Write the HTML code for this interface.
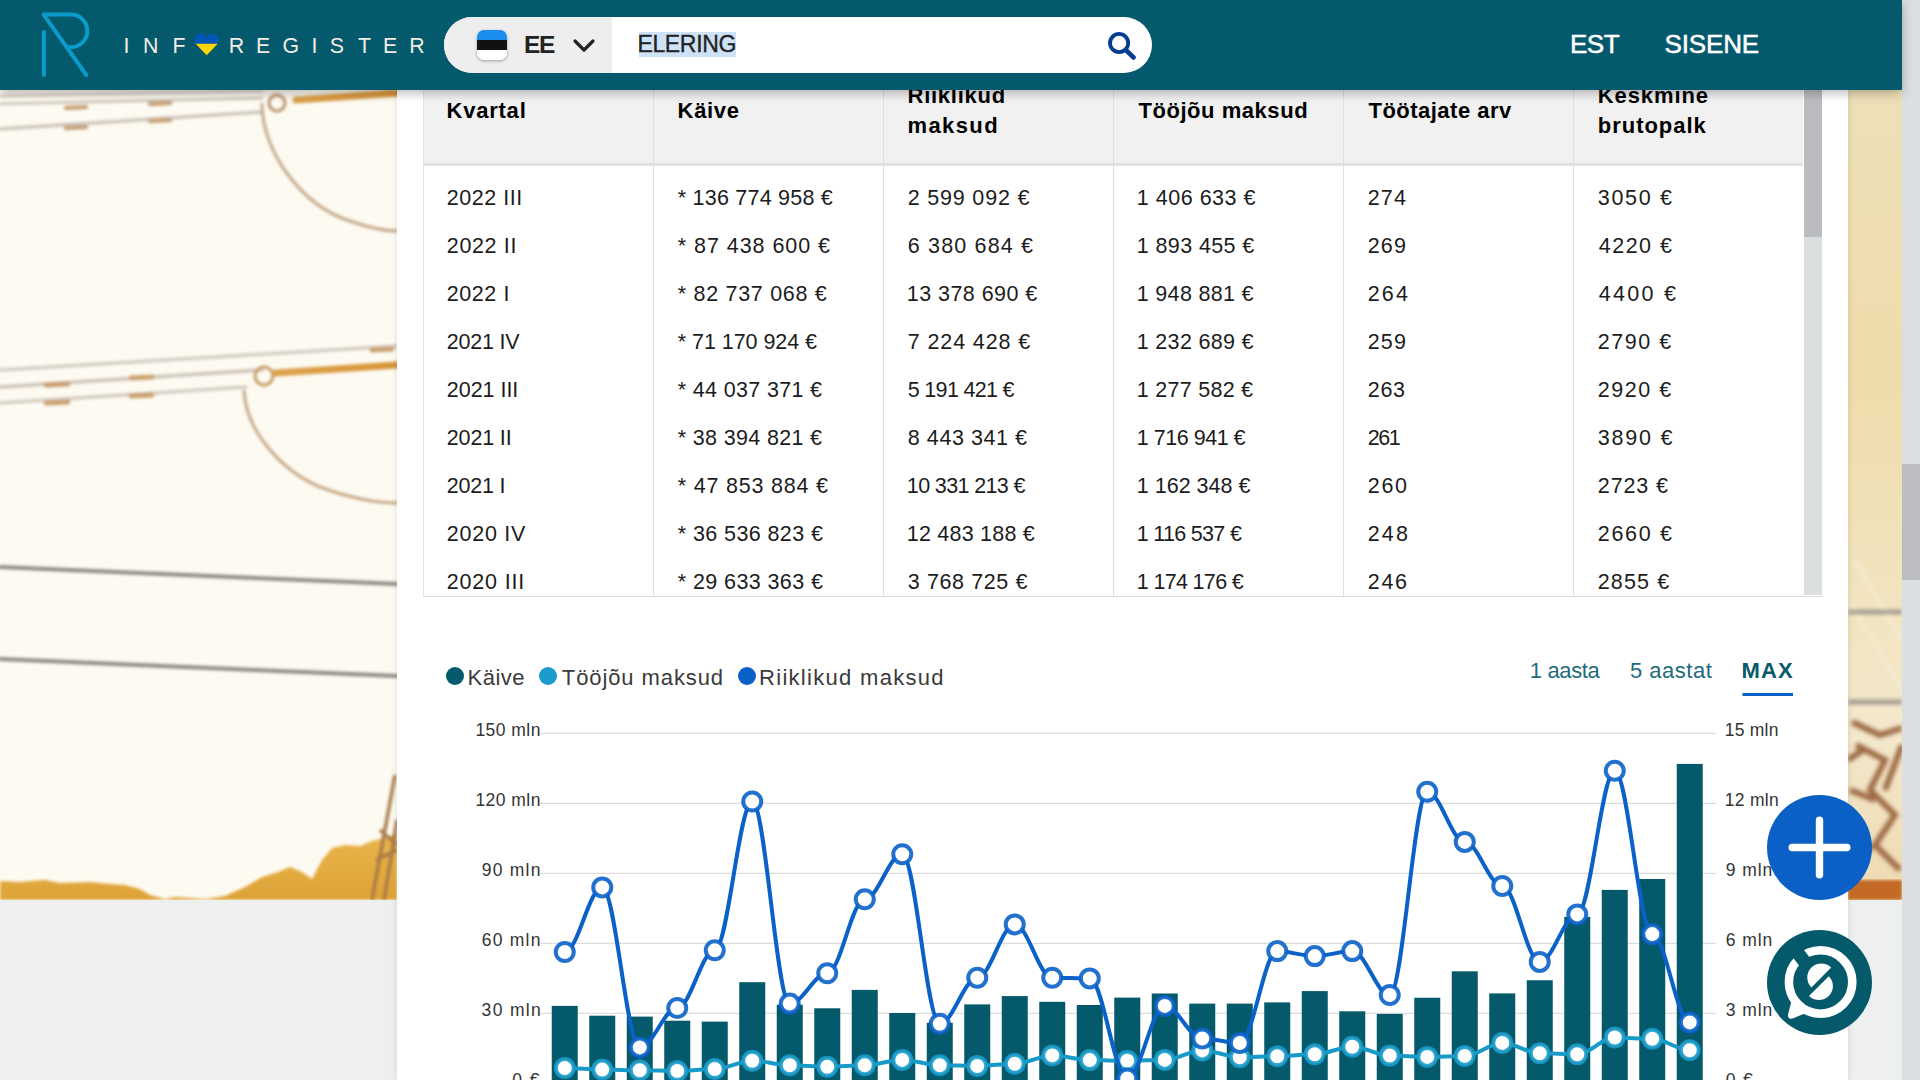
<!DOCTYPE html>
<html><head><meta charset="utf-8">
<style>
html,body{margin:0;padding:0;width:1920px;height:1080px;overflow:hidden;background:#eef0f0;font-family:"Liberation Sans",sans-serif;}
#bg{position:absolute;left:0;top:0;width:1902px;height:900px;background:#fcf9ef;overflow:hidden}
#panel{position:absolute;left:397px;top:0;width:1451px;height:1080px;background:#fff;box-shadow:0 0 6px rgba(0,0,0,.12)}
#thead{position:absolute;left:423px;top:70px;width:1380px;height:93px;background:#f1f1f1}
#theadb{position:absolute;left:423px;top:163px;width:1380px;height:3px;background:#dee2e3}
.vl{position:absolute;width:1px;background:#dcdfe0}
#tb{position:absolute;left:423px;top:595.5px;width:1400px;height:1px;background:#dadddf}
#tl{position:absolute;left:423px;top:90px;width:1px;height:506px;background:#e2e4e5}
#strack{position:absolute;left:1804px;top:90px;width:18px;height:505px;background:#dcdfe0}
#sthumb{position:absolute;left:1804px;top:90px;width:18px;height:147px;background:#bbbcc0}
#pstrack{position:absolute;left:1902px;top:0;width:18px;height:1080px;background:#dcdfe1}
#psthumb{position:absolute;left:1902px;top:464px;width:18px;height:116px;background:#bcbdc1}
#hdr{position:absolute;left:0;top:0;width:1902px;height:90px;background:#045a6c;box-shadow:0 3px 10px rgba(0,0,0,.28)}
#search{position:absolute;left:444px;top:17px;width:708px;height:56px;border-radius:28px;background:#fff;overflow:hidden}
#sleft{position:absolute;left:0;top:0;width:168px;height:56px;background:#eeeeee}
#flag{position:absolute;left:33px;top:13px;width:30px;height:30px;border-radius:7px;overflow:hidden;box-shadow:0 1px 3px rgba(0,0,0,.35);background:linear-gradient(#1b8ff0 0 33%,#111 33% 66%,#fff 66%)}
#hl{position:absolute;left:639px;top:32px;width:97px;height:25px;background:#cde1f7}
#svg{position:absolute;left:0;top:0}
.btn{position:absolute;width:105px;height:105px;border-radius:50%}
.ax{font-size:17.5px;fill:#333;letter-spacing:0.3px}
.th{font-size:22px;font-weight:bold;fill:#000;letter-spacing:0.3px}
.td{font-size:21.5px;fill:#1c1c1c;letter-spacing:0.6px}
.lgd{font-size:22px;fill:#3c3c3c;letter-spacing:0.5px}
.lg{font-size:23px;fill:#f4ece4}
</style></head><body>
<div id="bg">
<svg width="1902" height="900" style="position:absolute;left:0;top:0">
<defs>
<filter id="bl" x="-5%" y="-5%" width="110%" height="110%"><feGaussianBlur stdDeviation="1.4"/></filter>
<filter id="bl2" x="-20%" y="-5%" width="140%" height="110%"><feGaussianBlur stdDeviation="2.2"/></filter>
<linearGradient id="gold" x1="0" y1="0" x2="0" y2="1"><stop offset="0" stop-color="#e9b54c"/><stop offset="1" stop-color="#dea235"/></linearGradient>
<linearGradient id="rod" x1="0" y1="0" x2="1" y2="0"><stop offset="0" stop-color="#dca24a"/><stop offset="1" stop-color="#d89438"/></linearGradient>
<linearGradient id="strip" x1="0" y1="0" x2="0" y2="1"><stop offset="0" stop-color="#ede0b8"/><stop offset="0.35" stop-color="#efdcab"/><stop offset="0.6" stop-color="#f1e3bd"/><stop offset="0.8" stop-color="#f3e8cc"/><stop offset="1" stop-color="#efd9b0"/></linearGradient>
</defs>
<rect width="1902" height="900" fill="#fdfaf1"/>
<g filter="url(#bl)" fill="none" stroke-linecap="round">
<path d="M0 96 L262 91" stroke="#d3ccc2" stroke-width="2.5"/>
<path d="M0 104 L262 98" stroke="#c9c0b5" stroke-width="2.5"/>
<path d="M0 129 L262 112" stroke="#cdc4ba" stroke-width="3.5"/>
<path d="M66 108 L86 107 M66 128 L86 127 M150 104 L170 103 M150 121 L170 120" stroke="#c8a47c" stroke-width="4.5"/>
<circle cx="277" cy="103" r="8" stroke="#b99570" stroke-width="3"/>
<path d="M296 100 L397 93" stroke="url(#rod)" stroke-width="7"/>
<path d="M262 104 C 262 150 300 205 350 221 C 370 228 385 231 397 231" stroke="#c4a888" stroke-width="3"/>
<path d="M0 370 L397 346" stroke="#d3ccc3" stroke-width="3.5"/>
<path d="M0 387 L262 370" stroke="#cbc2b8" stroke-width="3.5"/>
<path d="M0 403 L246 387" stroke="#d3ccc3" stroke-width="3.5"/>
<path d="M46 385 L68 384 M46 403 L68 402 M131 378 L152 377 M131 396 L152 395 M372 350 L392 349" stroke="#cba070" stroke-width="5"/>
<circle cx="264" cy="376" r="9" stroke="#c49a62" stroke-width="3"/>
<path d="M276 373 L397 365" stroke="url(#rod)" stroke-width="7"/>
<path d="M244 391 C 246 430 280 470 320 487 C 350 498 375 503 397 503" stroke="#c6a785" stroke-width="3"/>
<path d="M0 567 L397 584" stroke="#908a86" stroke-width="4"/>
<path d="M0 659 L397 676" stroke="#908a86" stroke-width="4"/>
</g>
<path d="M0 881 L20 882 L45 880 L60 883 L90 882 L110 884 L125 885 L140 889 L150 895 L165 899 L175 897 L205 899 L225 896 L245 887 L262 877 L275 873 L290 867 L302 872 L312 879 L322 860 L332 848 L345 845 L360 846 L372 841 L385 838 L397 834 L397 900 L0 900 Z" fill="url(#gold)" filter="url(#bl)"/>
<path d="M395 775 L372 900 M397 820 L384 900 M376 860 L397 850 M380 830 L397 845" stroke="#a87a48" stroke-width="3.5" fill="none" filter="url(#bl)"/>
<rect x="1848" y="90" width="54" height="810" fill="url(#strip)"/>
<g filter="url(#bl2)" fill="none">
<path d="M1848 598 L1902 690 M1855 560 L1902 640" stroke="#f6ecd4" stroke-width="3"/>
<path d="M1848 612 L1902 612" stroke="#8f8882" stroke-width="4"/>
<path d="M1848 702 L1902 702" stroke="#8f8882" stroke-width="4"/>
<path d="M1852 722 L1880 735 L1902 728 M1856 745 L1885 760 L1870 790 L1895 815 L1875 845 L1900 870 M1902 745 L1885 790 M1850 790 L1875 800 M1848 835 L1872 850 M1848 760 L1866 748" stroke="#9c6842" stroke-width="6"/>
</g>
<rect x="1848" y="880" width="54" height="20" fill="#c46a26" filter="url(#bl)"/>
</svg>
</div>
<div id="panel"></div>
<div id="thead"></div>
<div id="theadb"></div>
<div class="vl" style="left:653px;top:70px;height:526px"></div>
<div class="vl" style="left:883px;top:70px;height:526px"></div>
<div class="vl" style="left:1113px;top:70px;height:526px"></div>
<div class="vl" style="left:1343px;top:70px;height:526px"></div>
<div class="vl" style="left:1573px;top:70px;height:526px"></div>
<div id="tl"></div>
<div id="tb"></div>
<div id="strack"></div>
<div id="sthumb"></div>
<div id="pstrack"></div>
<div id="psthumb"></div>
<svg id="svg" width="1920" height="1080">
<text x="446.80" y="205.20" style="font-size:21.5px;fill:#1c1c1c;letter-spacing:0.543px;">2022 III</text>
<text x="677.80" y="205.20" style="font-size:21.5px;fill:#1c1c1c;letter-spacing:0.221px;">* 136 774 958 €</text>
<text x="907.80" y="205.20" style="font-size:21.5px;fill:#1c1c1c;letter-spacing:0.800px;">2 599 092 €</text>
<text x="1136.80" y="205.20" style="font-size:21.5px;fill:#1c1c1c;letter-spacing:0.510px;">1 406 633 €</text>
<text x="1367.80" y="205.20" style="font-size:21.5px;fill:#1c1c1c;letter-spacing:1.100px;">274</text>
<text x="1597.80" y="205.20" style="font-size:21.5px;fill:#1c1c1c;letter-spacing:1.680px;">3050 €</text>
<text x="446.80" y="253.20" style="font-size:21.5px;fill:#1c1c1c;letter-spacing:0.650px;">2022 II</text>
<text x="677.80" y="253.20" style="font-size:21.5px;fill:#1c1c1c;letter-spacing:0.946px;">* 87 438 600 €</text>
<text x="907.80" y="253.20" style="font-size:21.5px;fill:#1c1c1c;letter-spacing:1.160px;">6 380 684 €</text>
<text x="1136.80" y="253.20" style="font-size:21.5px;fill:#1c1c1c;letter-spacing:0.390px;">1 893 455 €</text>
<text x="1367.80" y="253.20" style="font-size:21.5px;fill:#1c1c1c;letter-spacing:1.100px;">269</text>
<text x="1598.80" y="253.20" style="font-size:21.5px;fill:#1c1c1c;letter-spacing:1.480px;">4220 €</text>
<text x="446.80" y="301.20" style="font-size:21.5px;fill:#1c1c1c;letter-spacing:0.560px;">2022 I</text>
<text x="677.80" y="301.20" style="font-size:21.5px;fill:#1c1c1c;letter-spacing:0.700px;">* 82 737 068 €</text>
<text x="906.80" y="301.20" style="font-size:21.5px;fill:#1c1c1c;letter-spacing:0.445px;">13 378 690 €</text>
<text x="1136.80" y="301.20" style="font-size:21.5px;fill:#1c1c1c;letter-spacing:0.310px;">1 948 881 €</text>
<text x="1367.80" y="301.20" style="font-size:21.5px;fill:#1c1c1c;letter-spacing:2.100px;">264</text>
<text x="1598.80" y="301.20" style="font-size:21.5px;fill:#1c1c1c;letter-spacing:2.260px;">4400 €</text>
<text x="446.80" y="349.20" style="font-size:21.5px;fill:#1c1c1c;letter-spacing:-0.233px;">2021 IV</text>
<text x="677.80" y="349.20" style="font-size:21.5px;fill:#1c1c1c;letter-spacing:-0.054px;">* 71 170 924 €</text>
<text x="907.80" y="349.20" style="font-size:21.5px;fill:#1c1c1c;letter-spacing:0.880px;">7 224 428 €</text>
<text x="1136.80" y="349.20" style="font-size:21.5px;fill:#1c1c1c;letter-spacing:0.310px;">1 232 689 €</text>
<text x="1367.80" y="349.20" style="font-size:21.5px;fill:#1c1c1c;letter-spacing:1.100px;">259</text>
<text x="1597.80" y="349.20" style="font-size:21.5px;fill:#1c1c1c;letter-spacing:1.520px;">2790 €</text>
<text x="446.80" y="397.20" style="font-size:21.5px;fill:#1c1c1c;letter-spacing:-0.029px;">2021 III</text>
<text x="677.80" y="397.20" style="font-size:21.5px;fill:#1c1c1c;letter-spacing:0.338px;">* 44 037 371 €</text>
<text x="907.80" y="397.20" style="font-size:21.5px;fill:#1c1c1c;letter-spacing:-0.690px;">5 191 421 €</text>
<text x="1136.80" y="397.20" style="font-size:21.5px;fill:#1c1c1c;letter-spacing:0.270px;">1 277 582 €</text>
<text x="1367.80" y="397.20" style="font-size:21.5px;fill:#1c1c1c;letter-spacing:0.700px;">263</text>
<text x="1597.80" y="397.20" style="font-size:21.5px;fill:#1c1c1c;letter-spacing:1.520px;">2920 €</text>
<text x="446.80" y="445.20" style="font-size:21.5px;fill:#1c1c1c;letter-spacing:-0.150px;">2021 II</text>
<text x="677.80" y="445.20" style="font-size:21.5px;fill:#1c1c1c;letter-spacing:0.338px;">* 38 394 821 €</text>
<text x="907.80" y="445.20" style="font-size:21.5px;fill:#1c1c1c;letter-spacing:0.570px;">8 443 341 €</text>
<text x="1136.80" y="445.20" style="font-size:21.5px;fill:#1c1c1c;letter-spacing:-0.480px;">1 716 941 €</text>
<text x="1367.80" y="445.20" style="font-size:21.5px;fill:#1c1c1c;letter-spacing:-1.450px;">261</text>
<text x="1597.80" y="445.20" style="font-size:21.5px;fill:#1c1c1c;letter-spacing:1.760px;">3890 €</text>
<text x="446.80" y="493.20" style="font-size:21.5px;fill:#1c1c1c;letter-spacing:-0.240px;">2021 I</text>
<text x="677.80" y="493.20" style="font-size:21.5px;fill:#1c1c1c;letter-spacing:0.792px;">* 47 853 884 €</text>
<text x="906.80" y="493.20" style="font-size:21.5px;fill:#1c1c1c;letter-spacing:-0.627px;">10 331 213 €</text>
<text x="1136.80" y="493.20" style="font-size:21.5px;fill:#1c1c1c;letter-spacing:0.000px;">1 162 348 €</text>
<text x="1367.80" y="493.20" style="font-size:21.5px;fill:#1c1c1c;letter-spacing:1.700px;">260</text>
<text x="1597.80" y="493.20" style="font-size:21.5px;fill:#1c1c1c;letter-spacing:0.900px;">2723 €</text>
<text x="446.80" y="541.20" style="font-size:21.5px;fill:#1c1c1c;letter-spacing:0.750px;">2020 IV</text>
<text x="677.80" y="541.20" style="font-size:21.5px;fill:#1c1c1c;letter-spacing:0.400px;">* 36 536 823 €</text>
<text x="906.80" y="541.20" style="font-size:21.5px;fill:#1c1c1c;letter-spacing:0.227px;">12 483 188 €</text>
<text x="1136.80" y="541.20" style="font-size:21.5px;fill:#1c1c1c;letter-spacing:-0.690px;">1 116 537 €</text>
<text x="1367.80" y="541.20" style="font-size:21.5px;fill:#1c1c1c;letter-spacing:2.100px;">248</text>
<text x="1597.80" y="541.20" style="font-size:21.5px;fill:#1c1c1c;letter-spacing:1.680px;">2660 €</text>
<text x="446.80" y="589.20" style="font-size:21.5px;fill:#1c1c1c;letter-spacing:0.814px;">2020 III</text>
<text x="677.80" y="589.20" style="font-size:21.5px;fill:#1c1c1c;letter-spacing:0.400px;">* 29 633 363 €</text>
<text x="907.80" y="589.20" style="font-size:21.5px;fill:#1c1c1c;letter-spacing:0.610px;">3 768 725 €</text>
<text x="1136.80" y="589.20" style="font-size:21.5px;fill:#1c1c1c;letter-spacing:-0.670px;">1 174 176 €</text>
<text x="1367.80" y="589.20" style="font-size:21.5px;fill:#1c1c1c;letter-spacing:1.700px;">246</text>
<text x="1597.80" y="589.20" style="font-size:21.5px;fill:#1c1c1c;letter-spacing:1.120px;">2855 €</text>
<text x="446.50" y="118.25" style="font-size:22px;font-weight:bold;fill:#000;letter-spacing:0.775px;">Kvartal</text>
<text x="677.60" y="118.25" style="font-size:22px;font-weight:bold;fill:#000;letter-spacing:0.675px;">Käive</text>
<text x="907.50" y="102.50" style="font-size:22px;font-weight:bold;fill:#000;letter-spacing:0.750px;">Riiklikud</text>
<text x="907.50" y="132.50" style="font-size:22px;font-weight:bold;fill:#000;letter-spacing:1.400px;">maksud</text>
<text x="1138.50" y="118.25" style="font-size:22px;font-weight:bold;fill:#000;letter-spacing:0.542px;">Tööjõu maksud</text>
<text x="1368.50" y="118.10" style="font-size:22px;font-weight:bold;fill:#000;letter-spacing:0.479px;">Töötajate arv</text>
<text x="1597.80" y="102.50" style="font-size:22px;font-weight:bold;fill:#000;letter-spacing:0.900px;">Keskmine</text>
<text x="1597.80" y="132.50" style="font-size:22px;font-weight:bold;fill:#000;letter-spacing:0.975px;">brutopalk</text>
<text x="467.60" y="685.00" style="font-size:22px;fill:#3a3a3a;letter-spacing:0.475px;">Käive</text>
<text x="561.80" y="685.00" style="font-size:22px;fill:#3a3a3a;letter-spacing:0.908px;">Tööjõu maksud</text>
<text x="759.00" y="685.00" style="font-size:22px;fill:#3a3a3a;letter-spacing:1.300px;">Riiklikud maksud</text>
<text x="1529.80" y="678.30" style="font-size:22px;fill:#1d6b7c;letter-spacing:-0.367px;">1 aasta</text>
<text x="1630.00" y="678.30" style="font-size:22px;fill:#1d6b7c;letter-spacing:0.500px;">5 aastat</text>
<text x="1741.40" y="678.30" style="font-size:22px;font-weight:bold;fill:#055a6b;letter-spacing:1.250px;">MAX</text>
<text x="475.40" y="736.20" style="font-size:17.5px;fill:#333;letter-spacing:0.467px;">150 mln</text>
<text x="475.40" y="806.20" style="font-size:17.5px;fill:#333;letter-spacing:0.467px;">120 mln</text>
<text x="481.70" y="876.20" style="font-size:17.5px;fill:#333;letter-spacing:1.230px;">90 mln</text>
<text x="481.70" y="946.20" style="font-size:17.5px;fill:#333;letter-spacing:1.230px;">60 mln</text>
<text x="481.60" y="1016.20" style="font-size:17.5px;fill:#333;letter-spacing:1.340px;">30 mln</text>
<text x="512.20" y="1086.20" style="font-size:17.5px;fill:#333;letter-spacing:1.450px;">0 €</text>
<text x="1724.80" y="736.20" style="font-size:17.5px;fill:#333;letter-spacing:0.220px;">15 mln</text>
<text x="1724.80" y="806.20" style="font-size:17.5px;fill:#333;letter-spacing:0.280px;">12 mln</text>
<text x="1725.80" y="876.20" style="font-size:17.5px;fill:#333;letter-spacing:0.900px;">9 mln</text>
<text x="1725.80" y="946.20" style="font-size:17.5px;fill:#333;letter-spacing:0.900px;">6 mln</text>
<text x="1725.80" y="1016.20" style="font-size:17.5px;fill:#333;letter-spacing:0.900px;">3 mln</text>
<text x="1725.80" y="1086.20" style="font-size:17.5px;fill:#333;letter-spacing:1.300px;">0 €</text>
<circle cx="455" cy="676" r="9" fill="#045a6a"/>
<circle cx="548" cy="676" r="9" fill="#1b9ccb"/>
<circle cx="747" cy="676" r="9" fill="#0a62c9"/>
<rect x="1742.5" y="693" width="50.5" height="3" fill="#0a62c9"/>
<line x1="540" x2="1715.5" y1="733.3" y2="733.3" stroke="#dcdcdc" stroke-width="1.3"/>
<line x1="540" x2="1715.5" y1="803.3" y2="803.3" stroke="#dcdcdc" stroke-width="1.3"/>
<line x1="540" x2="1715.5" y1="873.3" y2="873.3" stroke="#dcdcdc" stroke-width="1.3"/>
<line x1="540" x2="1715.5" y1="943.3" y2="943.3" stroke="#dcdcdc" stroke-width="1.3"/>
<line x1="540" x2="1715.5" y1="1013.3" y2="1013.3" stroke="#dcdcdc" stroke-width="1.3"/>
<line x1="540" x2="1715.5" y1="1083.3" y2="1083.3" stroke="#dcdcdc" stroke-width="1.3"/>
<rect x="551.75" y="1005.90" width="26" height="87.40" fill="#045a6a"/>
<rect x="589.25" y="1015.70" width="26" height="77.60" fill="#045a6a"/>
<rect x="626.75" y="1016.60" width="26" height="76.70" fill="#045a6a"/>
<rect x="664.25" y="1020.70" width="26" height="72.60" fill="#045a6a"/>
<rect x="701.75" y="1021.60" width="26" height="71.70" fill="#045a6a"/>
<rect x="739.25" y="982.20" width="26" height="111.10" fill="#045a6a"/>
<rect x="776.75" y="1004.70" width="26" height="88.60" fill="#045a6a"/>
<rect x="814.25" y="1008.30" width="26" height="85.00" fill="#045a6a"/>
<rect x="851.75" y="989.90" width="26" height="103.40" fill="#045a6a"/>
<rect x="889.25" y="1013.00" width="26" height="80.30" fill="#045a6a"/>
<rect x="926.75" y="1022.80" width="26" height="70.50" fill="#045a6a"/>
<rect x="964.25" y="1004.40" width="26" height="88.90" fill="#045a6a"/>
<rect x="1001.75" y="996.10" width="26" height="97.20" fill="#045a6a"/>
<rect x="1039.25" y="1001.80" width="26" height="91.50" fill="#045a6a"/>
<rect x="1076.75" y="1005.00" width="26" height="88.30" fill="#045a6a"/>
<rect x="1114.25" y="997.60" width="26" height="95.70" fill="#045a6a"/>
<rect x="1151.75" y="993.50" width="26" height="99.80" fill="#045a6a"/>
<rect x="1189.25" y="1003.60" width="26" height="89.70" fill="#045a6a"/>
<rect x="1226.75" y="1003.60" width="26" height="89.70" fill="#045a6a"/>
<rect x="1264.25" y="1002.40" width="26" height="90.90" fill="#045a6a"/>
<rect x="1301.75" y="991.10" width="26" height="102.20" fill="#045a6a"/>
<rect x="1339.25" y="1011.30" width="26" height="82.00" fill="#045a6a"/>
<rect x="1376.75" y="1013.90" width="26" height="79.40" fill="#045a6a"/>
<rect x="1414.25" y="997.75" width="26" height="95.55" fill="#045a6a"/>
<rect x="1451.75" y="971.30" width="26" height="122.00" fill="#045a6a"/>
<rect x="1489.25" y="993.40" width="26" height="99.90" fill="#045a6a"/>
<rect x="1526.75" y="980.25" width="26" height="113.05" fill="#045a6a"/>
<rect x="1564.25" y="916.90" width="26" height="176.40" fill="#045a6a"/>
<rect x="1601.75" y="889.90" width="26" height="203.40" fill="#045a6a"/>
<rect x="1639.25" y="879.00" width="26" height="214.30" fill="#045a6a"/>
<rect x="1676.75" y="763.90" width="26" height="329.40" fill="#045a6a"/>
<path d="M564.75 1068.00 C577.88 1068.00 589.12 1069.60 602.25 1069.60 C615.38 1069.60 626.62 1070.20 639.75 1070.20 C652.88 1070.20 664.12 1071.00 677.25 1071.00 C690.38 1071.00 701.62 1069.00 714.75 1069.00 C727.88 1069.00 739.12 1060.70 752.25 1060.70 C765.38 1060.70 776.62 1065.20 789.75 1065.20 C802.88 1065.20 814.12 1066.70 827.25 1066.70 C840.38 1066.70 851.62 1065.20 864.75 1065.20 C877.88 1065.20 889.12 1059.90 902.25 1059.90 C915.38 1059.90 926.62 1065.20 939.75 1065.20 C952.88 1065.20 964.12 1066.00 977.25 1066.00 C990.38 1066.00 1001.62 1063.70 1014.75 1063.70 C1027.88 1063.70 1039.12 1055.40 1052.25 1055.40 C1065.38 1055.40 1076.62 1060.10 1089.75 1060.10 C1102.88 1060.10 1114.12 1060.70 1127.25 1060.70 C1140.38 1060.70 1151.62 1059.90 1164.75 1059.90 C1177.88 1059.90 1189.12 1050.40 1202.25 1050.40 C1215.38 1050.40 1226.62 1057.20 1239.75 1057.20 C1252.88 1057.20 1264.12 1056.30 1277.25 1056.30 C1290.38 1056.30 1301.62 1054.20 1314.75 1054.20 C1327.88 1054.20 1339.12 1046.80 1352.25 1046.80 C1365.38 1046.80 1376.62 1055.60 1389.75 1055.60 C1402.88 1055.60 1414.12 1056.90 1427.25 1056.90 C1440.38 1056.90 1451.62 1055.90 1464.75 1055.90 C1477.88 1055.90 1489.12 1042.90 1502.25 1042.90 C1515.38 1042.90 1526.62 1053.20 1539.75 1053.20 C1552.88 1053.20 1564.12 1054.20 1577.25 1054.20 C1590.38 1054.20 1601.62 1037.50 1614.75 1037.50 C1627.88 1037.50 1639.12 1038.80 1652.25 1038.80 C1665.38 1038.80 1676.62 1050.20 1689.75 1050.20" fill="none" stroke="#189ac9" stroke-width="4" stroke-linejoin="round" stroke-linecap="round"/>
<circle cx="564.75" cy="1068.00" r="9" fill="#fff" stroke="#189ac9" stroke-width="4" stroke-opacity="0.9"/>
<circle cx="602.25" cy="1069.60" r="9" fill="#fff" stroke="#189ac9" stroke-width="4" stroke-opacity="0.9"/>
<circle cx="639.75" cy="1070.20" r="9" fill="#fff" stroke="#189ac9" stroke-width="4" stroke-opacity="0.9"/>
<circle cx="677.25" cy="1071.00" r="9" fill="#fff" stroke="#189ac9" stroke-width="4" stroke-opacity="0.9"/>
<circle cx="714.75" cy="1069.00" r="9" fill="#fff" stroke="#189ac9" stroke-width="4" stroke-opacity="0.9"/>
<circle cx="752.25" cy="1060.70" r="9" fill="#fff" stroke="#189ac9" stroke-width="4" stroke-opacity="0.9"/>
<circle cx="789.75" cy="1065.20" r="9" fill="#fff" stroke="#189ac9" stroke-width="4" stroke-opacity="0.9"/>
<circle cx="827.25" cy="1066.70" r="9" fill="#fff" stroke="#189ac9" stroke-width="4" stroke-opacity="0.9"/>
<circle cx="864.75" cy="1065.20" r="9" fill="#fff" stroke="#189ac9" stroke-width="4" stroke-opacity="0.9"/>
<circle cx="902.25" cy="1059.90" r="9" fill="#fff" stroke="#189ac9" stroke-width="4" stroke-opacity="0.9"/>
<circle cx="939.75" cy="1065.20" r="9" fill="#fff" stroke="#189ac9" stroke-width="4" stroke-opacity="0.9"/>
<circle cx="977.25" cy="1066.00" r="9" fill="#fff" stroke="#189ac9" stroke-width="4" stroke-opacity="0.9"/>
<circle cx="1014.75" cy="1063.70" r="9" fill="#fff" stroke="#189ac9" stroke-width="4" stroke-opacity="0.9"/>
<circle cx="1052.25" cy="1055.40" r="9" fill="#fff" stroke="#189ac9" stroke-width="4" stroke-opacity="0.9"/>
<circle cx="1089.75" cy="1060.10" r="9" fill="#fff" stroke="#189ac9" stroke-width="4" stroke-opacity="0.9"/>
<circle cx="1127.25" cy="1060.70" r="9" fill="#fff" stroke="#189ac9" stroke-width="4" stroke-opacity="0.9"/>
<circle cx="1164.75" cy="1059.90" r="9" fill="#fff" stroke="#189ac9" stroke-width="4" stroke-opacity="0.9"/>
<circle cx="1202.25" cy="1050.40" r="9" fill="#fff" stroke="#189ac9" stroke-width="4" stroke-opacity="0.9"/>
<circle cx="1239.75" cy="1057.20" r="9" fill="#fff" stroke="#189ac9" stroke-width="4" stroke-opacity="0.9"/>
<circle cx="1277.25" cy="1056.30" r="9" fill="#fff" stroke="#189ac9" stroke-width="4" stroke-opacity="0.9"/>
<circle cx="1314.75" cy="1054.20" r="9" fill="#fff" stroke="#189ac9" stroke-width="4" stroke-opacity="0.9"/>
<circle cx="1352.25" cy="1046.80" r="9" fill="#fff" stroke="#189ac9" stroke-width="4" stroke-opacity="0.9"/>
<circle cx="1389.75" cy="1055.60" r="9" fill="#fff" stroke="#189ac9" stroke-width="4" stroke-opacity="0.9"/>
<circle cx="1427.25" cy="1056.90" r="9" fill="#fff" stroke="#189ac9" stroke-width="4" stroke-opacity="0.9"/>
<circle cx="1464.75" cy="1055.90" r="9" fill="#fff" stroke="#189ac9" stroke-width="4" stroke-opacity="0.9"/>
<circle cx="1502.25" cy="1042.90" r="9" fill="#fff" stroke="#189ac9" stroke-width="4" stroke-opacity="0.9"/>
<circle cx="1539.75" cy="1053.20" r="9" fill="#fff" stroke="#189ac9" stroke-width="4" stroke-opacity="0.9"/>
<circle cx="1577.25" cy="1054.20" r="9" fill="#fff" stroke="#189ac9" stroke-width="4" stroke-opacity="0.9"/>
<circle cx="1614.75" cy="1037.50" r="9" fill="#fff" stroke="#189ac9" stroke-width="4" stroke-opacity="0.9"/>
<circle cx="1652.25" cy="1038.80" r="9" fill="#fff" stroke="#189ac9" stroke-width="4" stroke-opacity="0.9"/>
<circle cx="1689.75" cy="1050.20" r="9" fill="#fff" stroke="#189ac9" stroke-width="4" stroke-opacity="0.9"/>
<path d="M564.75 952.00 C577.88 952.00 589.12 887.40 602.25 887.40 C615.38 887.40 626.62 1047.40 639.75 1047.40 C652.88 1047.40 664.12 1008.00 677.25 1008.00 C690.38 1008.00 701.62 950.20 714.75 950.20 C727.88 950.20 739.12 801.50 752.25 801.50 C765.38 801.50 776.62 1003.60 789.75 1003.60 C802.88 1003.60 814.12 973.30 827.25 973.30 C840.38 973.30 851.62 899.30 864.75 899.30 C877.88 899.30 889.12 854.20 902.25 854.20 C915.38 854.20 926.62 1023.70 939.75 1023.70 C952.88 1023.70 964.12 977.80 977.25 977.80 C990.38 977.80 1001.62 924.40 1014.75 924.40 C1027.88 924.40 1039.12 977.80 1052.25 977.80 C1065.38 977.80 1076.62 978.40 1089.75 978.40 C1102.88 978.40 1114.12 1078.50 1127.25 1078.50 C1140.38 1078.50 1151.62 1005.90 1164.75 1005.90 C1177.88 1005.90 1189.12 1038.50 1202.25 1038.50 C1215.38 1038.50 1226.62 1043.00 1239.75 1043.00 C1252.88 1043.00 1264.12 951.10 1277.25 951.10 C1290.38 951.10 1301.62 956.10 1314.75 956.10 C1327.88 956.10 1339.12 951.10 1352.25 951.10 C1365.38 951.10 1376.62 995.06 1389.75 995.06 C1402.88 995.06 1414.12 791.70 1427.25 791.70 C1440.38 791.70 1451.62 841.90 1464.75 841.90 C1477.88 841.90 1489.12 886.00 1502.25 886.00 C1515.38 886.00 1526.62 961.90 1539.75 961.90 C1552.88 961.90 1564.12 914.40 1577.25 914.40 C1590.38 914.40 1601.62 770.80 1614.75 770.80 C1627.88 770.80 1639.12 934.10 1652.25 934.10 C1665.38 934.10 1676.62 1022.40 1689.75 1022.40" fill="none" stroke="#0a62c9" stroke-width="4" stroke-linejoin="round" stroke-linecap="round"/>
<circle cx="564.75" cy="952.00" r="9" fill="#fff" stroke="#0a62c9" stroke-width="4" stroke-opacity="0.9"/>
<circle cx="602.25" cy="887.40" r="9" fill="#fff" stroke="#0a62c9" stroke-width="4" stroke-opacity="0.9"/>
<circle cx="639.75" cy="1047.40" r="9" fill="#fff" stroke="#0a62c9" stroke-width="4" stroke-opacity="0.9"/>
<circle cx="677.25" cy="1008.00" r="9" fill="#fff" stroke="#0a62c9" stroke-width="4" stroke-opacity="0.9"/>
<circle cx="714.75" cy="950.20" r="9" fill="#fff" stroke="#0a62c9" stroke-width="4" stroke-opacity="0.9"/>
<circle cx="752.25" cy="801.50" r="9" fill="#fff" stroke="#0a62c9" stroke-width="4" stroke-opacity="0.9"/>
<circle cx="789.75" cy="1003.60" r="9" fill="#fff" stroke="#0a62c9" stroke-width="4" stroke-opacity="0.9"/>
<circle cx="827.25" cy="973.30" r="9" fill="#fff" stroke="#0a62c9" stroke-width="4" stroke-opacity="0.9"/>
<circle cx="864.75" cy="899.30" r="9" fill="#fff" stroke="#0a62c9" stroke-width="4" stroke-opacity="0.9"/>
<circle cx="902.25" cy="854.20" r="9" fill="#fff" stroke="#0a62c9" stroke-width="4" stroke-opacity="0.9"/>
<circle cx="939.75" cy="1023.70" r="9" fill="#fff" stroke="#0a62c9" stroke-width="4" stroke-opacity="0.9"/>
<circle cx="977.25" cy="977.80" r="9" fill="#fff" stroke="#0a62c9" stroke-width="4" stroke-opacity="0.9"/>
<circle cx="1014.75" cy="924.40" r="9" fill="#fff" stroke="#0a62c9" stroke-width="4" stroke-opacity="0.9"/>
<circle cx="1052.25" cy="977.80" r="9" fill="#fff" stroke="#0a62c9" stroke-width="4" stroke-opacity="0.9"/>
<circle cx="1089.75" cy="978.40" r="9" fill="#fff" stroke="#0a62c9" stroke-width="4" stroke-opacity="0.9"/>
<circle cx="1127.25" cy="1078.50" r="9" fill="#fff" stroke="#0a62c9" stroke-width="4" stroke-opacity="0.9"/>
<circle cx="1164.75" cy="1005.90" r="9" fill="#fff" stroke="#0a62c9" stroke-width="4" stroke-opacity="0.9"/>
<circle cx="1202.25" cy="1038.50" r="9" fill="#fff" stroke="#0a62c9" stroke-width="4" stroke-opacity="0.9"/>
<circle cx="1239.75" cy="1043.00" r="9" fill="#fff" stroke="#0a62c9" stroke-width="4" stroke-opacity="0.9"/>
<circle cx="1277.25" cy="951.10" r="9" fill="#fff" stroke="#0a62c9" stroke-width="4" stroke-opacity="0.9"/>
<circle cx="1314.75" cy="956.10" r="9" fill="#fff" stroke="#0a62c9" stroke-width="4" stroke-opacity="0.9"/>
<circle cx="1352.25" cy="951.10" r="9" fill="#fff" stroke="#0a62c9" stroke-width="4" stroke-opacity="0.9"/>
<circle cx="1389.75" cy="995.06" r="9" fill="#fff" stroke="#0a62c9" stroke-width="4" stroke-opacity="0.9"/>
<circle cx="1427.25" cy="791.70" r="9" fill="#fff" stroke="#0a62c9" stroke-width="4" stroke-opacity="0.9"/>
<circle cx="1464.75" cy="841.90" r="9" fill="#fff" stroke="#0a62c9" stroke-width="4" stroke-opacity="0.9"/>
<circle cx="1502.25" cy="886.00" r="9" fill="#fff" stroke="#0a62c9" stroke-width="4" stroke-opacity="0.9"/>
<circle cx="1539.75" cy="961.90" r="9" fill="#fff" stroke="#0a62c9" stroke-width="4" stroke-opacity="0.9"/>
<circle cx="1577.25" cy="914.40" r="9" fill="#fff" stroke="#0a62c9" stroke-width="4" stroke-opacity="0.9"/>
<circle cx="1614.75" cy="770.80" r="9" fill="#fff" stroke="#0a62c9" stroke-width="4" stroke-opacity="0.9"/>
<circle cx="1652.25" cy="934.10" r="9" fill="#fff" stroke="#0a62c9" stroke-width="4" stroke-opacity="0.9"/>
<circle cx="1689.75" cy="1022.40" r="9" fill="#fff" stroke="#0a62c9" stroke-width="4" stroke-opacity="0.9"/>
</svg>
<div id="hdr">
<svg width="1902" height="90" style="position:absolute;left:0;top:0">
<g fill="none" stroke="#0a9bcb" stroke-width="4" stroke-linecap="round" stroke-linejoin="round">
<path d="M43.9 32 L43.9 75"/>
<path d="M43.7 14.6 L86.3 75"/>
<path d="M43.7 14.6 L71 14.6 A16.3 16.3 0 0 1 71 47.2 L67.5 47.2"/>
</g>
<clipPath id="heart"><path d="M206.70 55.20 L196.35 44.41 A6.30 6.30 0 1 1 206.7 37.59 A6.30 6.30 0 1 1 217.05 44.41 Z"/></clipPath>
<g clip-path="url(#heart)"><rect x="190" y="30" width="32" height="13.75" fill="#0057b8"/><rect x="190" y="43.75" width="32" height="13" fill="#ffd500"/></g>
</svg>
<div id="search">
<div id="sleft"><div id="flag"></div></div>
</div>
<div id="hl"></div>
<svg width="1902" height="90" style="position:absolute;left:0;top:0">
<text x="1570.00" y="53.00" style="font-size:26px;fill:#fff;letter-spacing:-0.500px;stroke:#fff;stroke-width:0.5px;">EST</text>
<text x="1664.50" y="53.00" style="font-size:26px;fill:#fff;letter-spacing:-0.150px;stroke:#fff;stroke-width:0.5px;">SISENE</text>
<text x="524.00" y="53.40" style="font-size:24.5px;font-weight:bold;fill:#222;letter-spacing:-1.400px;">EE</text>
<text x="637.40" y="51.50" style="font-size:23px;fill:#222;letter-spacing:-0.333px;stroke:#222;stroke-width:0.35px;">ELERING</text>
<text x="123.60" y="52.90" style="font-size:21.3px;fill:#f3ece4;letter-spacing:0.000px;">I</text>
<text x="143.00" y="52.90" style="font-size:21.3px;fill:#f3ece4;letter-spacing:0.000px;">N</text>
<text x="172.40" y="52.90" style="font-size:21.3px;fill:#f3ece4;letter-spacing:0.000px;">F</text>
<text x="228.80" y="52.90" style="font-size:21.3px;fill:#f3ece4;letter-spacing:0.000px;">R</text>
<text x="256.00" y="52.90" style="font-size:21.3px;fill:#f3ece4;letter-spacing:0.000px;">E</text>
<text x="282.40" y="52.90" style="font-size:21.3px;fill:#f3ece4;letter-spacing:0.000px;">G</text>
<text x="311.40" y="52.90" style="font-size:21.3px;fill:#f3ece4;letter-spacing:0.000px;">I</text>
<text x="329.80" y="52.90" style="font-size:21.3px;fill:#f3ece4;letter-spacing:0.000px;">S</text>
<text x="358.00" y="52.90" style="font-size:21.3px;fill:#f3ece4;letter-spacing:0.000px;">T</text>
<text x="383.00" y="52.90" style="font-size:21.3px;fill:#f3ece4;letter-spacing:0.000px;">E</text>
<text x="409.20" y="52.90" style="font-size:21.3px;fill:#f3ece4;letter-spacing:0.000px;">R</text>
<path d="M575 41 L584 50 L593 41" fill="none" stroke="#222" stroke-width="3.2" stroke-linecap="round" stroke-linejoin="round"/>
<circle cx="1119.1" cy="43" r="9.1" fill="none" stroke="#033c90" stroke-width="3.8"/>
<path d="M1125.8 49.8 L1133.6 57.5" stroke="#033c90" stroke-width="4.6" stroke-linecap="round"/>
</svg>
</div>
<div class="btn" style="left:1766.8px;top:794.9px;background:#0a60c4">
<svg width="105" height="105"><path d="M52.5 25.2 V79.8 M25.2 52.5 H79.8" stroke="#fff" stroke-width="7.4" stroke-linecap="round"/></svg>
</div>
<div class="btn" style="left:1766.7px;top:929.7px;background:#045a6a">
<svg width="105" height="105">
<circle cx="53.6" cy="52" r="31.7" fill="none" stroke="#fff" stroke-width="8.6"/>
<path d="M24.5 71 L21 84.5 Q20.5 89.5 25.5 88.5 L39 83 Z" fill="#fff"/>
<path d="M58.2 47.6 L32.3 14.1 L21.8 22.2 L47.7 55.7 Z" fill="#045a6a"/>
<path d="M64.2 37.6 L44.4 57.4 A14 14 0 0 1 64.2 37.6 Z" fill="#fff"/>
<path d="M61.8 46.2 L42 66 A14 14 0 0 0 61.8 46.2 Z" fill="#fff"/>
</svg>
</div>
</body></html>
